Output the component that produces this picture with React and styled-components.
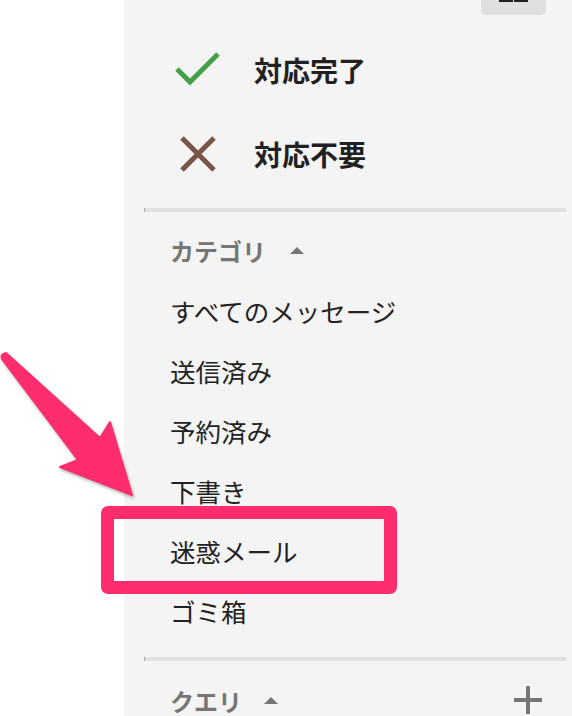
import React from 'react'
import styled, { createGlobalStyle } from 'styled-components'

const GlobalStyle = createGlobalStyle`
  html, body {
    margin: 0;
    padding: 0;
    background: #ffffff;
  }
  body {
    font-family: "Noto Sans CJK JP", "Noto Sans", sans-serif;
  }
`

const PINK = '#ff2d6d'

const Page = styled.div`
  position: relative;
  display: flex;
  height: 716px;
  overflow: hidden;
`

const Gutter = styled.div`
  width: 124px;
  flex-shrink: 0;
  background: #ffffff;
`

const Sidebar = styled.nav`
  flex: 1;
  display: flex;
  flex-direction: column;
  background: #f4f4f4;

  & > * {
    flex-shrink: 0;
  }
`

const Toolbar = styled.div`
  height: 15px;
  display: flex;
  justify-content: flex-end;
  padding-right: 26px;
`

const ToolButton = styled.button`
  width: 65px;
  height: 15px;
  padding: 0;
  border: none;
  border-radius: 0 0 5px 5px;
  background: #dfdfdf;
  display: flex;
  justify-content: center;
  align-items: flex-start;
`

const ActionList = styled.div`
  padding-top: 13px;
`

const ActionRow = styled.div`
  height: 84px;
  display: flex;
  align-items: center;
  padding-left: 46px;
`

const IconBox = styled.span`
  width: 56px;
  display: flex;
  justify-content: center;
`

const ActionLabel = styled.span`
  margin-left: 28px;
  font-size: 28px;
  font-weight: 700;
  color: #212121;
`

const Divider = styled.hr`
  height: 4px;
  border: none;
  border-left: 1px solid #a9a9a9;
  background: #e0e0e0;
  margin: ${(p) => p.$top}px 6px 0 20px;
`

const SectionHeader = styled.div`
  height: 60px;
  margin-top: ${(p) => p.$top}px;
  display: flex;
  align-items: center;
  padding: 0 30px 0 46px;
`

const HeaderLabel = styled.span`
  font-size: 24px;
  font-weight: 700;
  color: #767676;
`

const Caret = styled.span`
  width: 0;
  height: 0;
  margin-left: ${(p) => p.$gap}px;
  border-left: 7px solid transparent;
  border-right: 7px solid transparent;
  border-bottom: 7px solid #767676;
`

const AddButton = styled.button`
  margin-left: auto;
  padding: 0;
  border: none;
  background: none;
  display: flex;
`

const Item = styled.div`
  height: 60px;
  display: flex;
  align-items: center;
  padding-left: 46px;
  font-size: 25.5px;
  color: #222222;
`

const Highlight = styled.div`
  position: absolute;
  left: 101px;
  top: 506px;
  width: 296px;
  height: 88px;
  box-sizing: border-box;
  border: 13px solid ${PINK};
  border-radius: 7px;
`

const Arrow = styled.svg`
  position: absolute;
  left: 0;
  top: 345px;
  filter: drop-shadow(1px 2px 1.5px rgba(0, 0, 0, 0.3));
`

const categories = [
  'すべてのメッセージ',
  '送信済み',
  '予約済み',
  '下書き',
  '迷惑メール',
  'ゴミ箱',
]

export default function App() {
  return (
    <>
      <GlobalStyle />
      <Page>
        <Gutter />
        <Sidebar>
          <Toolbar>
            <ToolButton aria-label="表示">
              <svg width="30" height="2" viewBox="0 0 30 2">
                <rect x="0" y="0" width="14" height="2" fill="#1f1f1f" />
                <rect x="15" y="0" width="14" height="2" fill="#1f1f1f" />
              </svg>
            </ToolButton>
          </Toolbar>

          <ActionList>
            <ActionRow>
              <IconBox>
                <svg width="46" height="36" viewBox="0 0 46 36">
                  <polyline
                    points="2,17 15,30 43,2"
                    fill="none"
                    stroke="#43a047"
                    strokeWidth="5"
                  />
                </svg>
              </IconBox>
              <ActionLabel>対応完了</ActionLabel>
            </ActionRow>
            <ActionRow>
              <IconBox>
                <svg width="36" height="36" viewBox="0 0 36 36">
                  <path
                    d="M2 2 L34 34 M34 2 L2 34"
                    fill="none"
                    stroke="#795548"
                    strokeWidth="5"
                  />
                </svg>
              </IconBox>
              <ActionLabel>対応不要</ActionLabel>
            </ActionRow>
          </ActionList>

          <Divider $top={12} />
          <SectionHeader $top={8}>
            <HeaderLabel>カテゴリ</HeaderLabel>
            <Caret $gap={24} />
          </SectionHeader>
          {categories.map((c) => (
            <Item key={c}>{c}</Item>
          ))}

          <Divider $top={17} />
          <SectionHeader $top={9}>
            <HeaderLabel>クエリ</HeaderLabel>
            <Caret $gap={22} />
            <AddButton aria-label="追加">
              <svg width="28" height="28" viewBox="0 0 28 28">
                <path
                  d="M14 0 V28 M0 14 H28"
                  stroke="#767676"
                  strokeWidth="4"
                />
              </svg>
            </AddButton>
          </SectionHeader>
        </Sidebar>

        <Arrow width="140" height="160" viewBox="0 0 140 160">
          <path
            d="M6 8 L100 93 L110 77 L132 150 L60 122 L78 115 L2 14 Q0 9 6 8 Z"
            fill={PINK}
            stroke={PINK}
            strokeWidth="2"
            strokeLinejoin="round"
          />
        </Arrow>
        <Highlight />
      </Page>
    </>
  )
}
